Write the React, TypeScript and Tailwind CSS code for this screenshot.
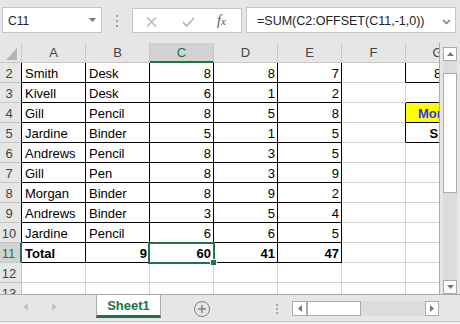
import React from 'react';

interface Row {
  n: number;
  cells: string[];
}

const rows: Row[] = [
  { n: 2, cells: ['Smith', 'Desk', '8', '8', '7', '', '8'] },
  { n: 3, cells: ['Kivell', 'Desk', '6', '1', '2', '', ''] },
  { n: 4, cells: ['Gill', 'Pencil', '8', '5', '8', '', 'Month'] },
  { n: 5, cells: ['Jardine', 'Binder', '5', '1', '5', '', 'S1'] },
  { n: 6, cells: ['Andrews', 'Pencil', '8', '3', '5', '', ''] },
  { n: 7, cells: ['Gill', 'Pen', '8', '3', '9', '', ''] },
  { n: 8, cells: ['Morgan', 'Binder', '8', '9', '2', '', ''] },
  { n: 9, cells: ['Andrews', 'Binder', '3', '5', '4', '', ''] },
  { n: 10, cells: ['Jardine', 'Pencil', '6', '6', '5', '', ''] },
  { n: 11, cells: ['Total', '9', '60', '41', '47', '', ''] },
  { n: 12, cells: ['', '', '', '', '', '', ''] },
  { n: 13, cells: ['', '', '', '', '', '', ''] },
];

const cols = ['A', 'B', 'C', 'D', 'E', 'F', 'G'];

// which border style a cell gets
const cellBorder = (r: number, c: number) => {
  const boxed = r >= 2 && r <= 11 && c <= 4;
  if (boxed) return 'border-r border-b border-black';
  if (c === 5 && (r === 2 || r === 4 || r === 5)) return 'border-r border-b border-r-black border-b-[#d4d4d4]';
  if (c === 6 && (r === 2 || r === 3 || r === 4 || r === 5)) return 'border-r border-b border-r-[#d4d4d4] border-b-black';
  return 'border-r border-b border-[#d4d4d4]';
};

const cellAlign = (r: number, c: number) => {
  if (c === 6) return 'justify-center';
  if (c >= 2 || (r === 11 && c === 1)) return 'justify-end pr-[2px]';
  return 'justify-start pl-[3px]';
};

const rowHeaderClass = (r: number) => {
  if (r === 11) return 'bg-[#d2d2d2] text-[#217346] border-r-2 border-r-[#217346] border-b border-b-[#c6c6c6]';
  if (r >= 2 && r <= 10) return 'bg-[#e6e6e6] text-[#444] border-r border-r-black border-b border-b-[#c6c6c6]';
  return 'bg-[#e6e6e6] text-[#444] border-r border-b border-[#c6c6c6]';
};

function TopBar() {
  return (
    <div className="h-[43px] bg-[#e6e6e6] flex items-start">
      {/* Name box */}
      <div className="ml-[2px] mt-[7px] w-[100px] h-[26px] bg-white border border-[#c6c6c6] flex items-center pl-[5px] pt-[1px] relative">
        <span className="text-[12px] text-[#222]">C11</span>
        <svg className="absolute left-[86px] top-[10px]" width="7" height="4" viewBox="0 0 7 4">
          <path d="M0 0 L7 0 L3.5 4 Z" fill="#777" />
        </svg>
      </div>
      {/* drag dots */}
      <div className="ml-[14px] mt-[15px] flex flex-col gap-[3px]">
        <div className="w-[2px] h-[2px] bg-[#a0a0a0]" />
        <div className="w-[2px] h-[2px] bg-[#a0a0a0]" />
        <div className="w-[2px] h-[2px] bg-[#a0a0a0]" />
      </div>
      {/* cancel / enter / fx */}
      <div className="ml-[14px] mt-[8px] w-[110px] h-[25px] bg-white border border-[#c6c6c6] flex items-center">
        <svg className="ml-[13px] mt-[3px]" width="11" height="10" viewBox="0 0 11 10">
          <path d="M1 0.5 L10 9.5 M10 0.5 L1 9.5" stroke="#b4b4b4" strokeWidth="1.3" />
        </svg>
        <svg className="ml-[25px] mt-[3px]" width="13" height="10" viewBox="0 0 13 10">
          <path d="M1 5 L4.5 9 L12 1" stroke="#b4b4b4" strokeWidth="1.6" fill="none" />
        </svg>
        <span className="ml-[22px] mt-[1px] italic text-[14px] text-[#555]" style={{ fontFamily: '"Liberation Serif", serif' }}>
          f<span className="text-[11px]">x</span>
        </span>
      </div>
      {/* formula input */}
      <div className="ml-[4px] mt-[7px] w-[210px] h-[26px] bg-white border border-[#c6c6c6] flex items-center pl-[10px] pt-[2px] relative">
        <span className="text-[12.5px] text-[#222] whitespace-nowrap">=SUM(C2:OFFSET(C11,-1,0))</span>
        <svg className="absolute left-[195px] top-[11px]" width="9" height="6" viewBox="0 0 9 6">
          <path d="M1 1 L4.5 4.5 L8 1" stroke="#777" strokeWidth="1.5" fill="none" />
        </svg>
      </div>
    </div>
  );
}

function Grid() {
  return (
    <div className="relative w-[440px] h-[251px] overflow-hidden border-r border-[#ababab]">
      {/* column headers */}
      <div className="flex h-[20px]">
        <div className="w-[22px] shrink-0 bg-[#e6e6e6] border-r border-b border-[#c6c6c6] relative">
          <svg className="absolute left-[6px] top-[5px]" width="11" height="12" viewBox="0 0 11 12">
            <path d="M11 0 L11 12 L0 12 Z" fill="#b4b4b4" />
          </svg>
        </div>
        {cols.map((c) => (
          <div
            key={c}
            className={`w-[64px] shrink-0 flex items-center justify-center border-r ${
              c === 'C'
                ? 'bg-[#d2d2d2] text-[#217346] border-r-[#c6c6c6] border-b-2 border-b-[#217346]'
                : 'bg-[#e6e6e6] text-[#444] border-b border-[#c6c6c6]'
            }`}
          >
            {c}
          </div>
        ))}
      </div>

      {/* rows */}
      {rows.map((row) => (
        <div key={row.n} className="flex h-[20px]">
          <div className={`w-[22px] shrink-0 flex items-center justify-center pr-[3px] pt-[1px] ${rowHeaderClass(row.n)}`}>
            {row.n}
          </div>
          {row.cells.map((v, ci) => (
            <div
              key={ci}
              className={`w-[64px] shrink-0 flex items-center pt-[1px] whitespace-nowrap ${cellBorder(row.n, ci)} ${cellAlign(row.n, ci)} ${
                row.n === 11 ? 'font-bold' : ''
              } ${row.n === 4 && ci === 6 ? 'bg-[#ffff00] text-[#3333ff] font-bold' : ''} ${
                row.n === 5 && ci === 6 ? 'font-bold' : ''
              }`}
            >
              {v}
            </div>
          ))}
        </div>
      ))}

      {/* active cell C11 */}
      <div className="absolute left-[148px] top-[199px] w-[67px] h-[22px] border-2 border-[#217346]" />
      <div className="absolute left-[210px] top-[216px] w-[7px] h-[7px] bg-[#217346] border border-white" />
    </div>
  );
}

function VScroll() {
  return (
    <div className="w-[20px] h-[251px] bg-[#e6e6e6] flex flex-col pl-[3px]">
      <div className="h-[4px]" />
      <div className="w-[14px] h-[14px] bg-white border border-[#ababab] flex items-center justify-center">
        <svg width="7" height="4" viewBox="0 0 7 4">
          <path d="M0 4 L7 4 L3.5 0 Z" fill="#777" />
        </svg>
      </div>
      <div className="w-[14px] flex-1 bg-[#dcdcdc] pt-[12px]">
        <div className="w-[14px] h-[120px] bg-white border border-[#ababab]" />
      </div>
      <div className="w-[14px] h-[14px] bg-white border border-[#ababab] flex items-center justify-center">
        <svg width="7" height="4" viewBox="0 0 7 4">
          <path d="M0 0 L7 0 L3.5 4 Z" fill="#777" />
        </svg>
      </div>
    </div>
  );
}

function SheetBar() {
  return (
    <div>
      <div className="h-[27px] bg-[#e6e6e6] border-t border-[#ababab] flex items-start">
        {/* nav arrows */}
        <div className="w-[96px] shrink-0 flex items-center h-[23px]">
          <svg className="ml-[23px]" width="5" height="8" viewBox="0 0 5 8">
            <path d="M5 0 L5 8 L0 4 Z" fill="#c4c4c4" />
          </svg>
          <svg className="ml-[24px]" width="5" height="8" viewBox="0 0 5 8">
            <path d="M0 0 L0 8 L5 4 Z" fill="#c4c4c4" />
          </svg>
        </div>
        {/* tab */}
        <div className="w-[65px] shrink-0 h-[23px] bg-white border-x border-[#ababab] border-b-[3px] border-b-[#217346] flex items-center justify-center">
          <span className="font-bold text-[#217346]">Sheet1</span>
        </div>
        {/* add sheet */}
        <div className="ml-[33px] mt-[6px] w-[16px] h-[16px] rounded-full border-[1.5px] border-[#808080] flex items-center justify-center">
          <svg width="8" height="8" viewBox="0 0 8 8">
            <path d="M4 0 L4 8 M0 4 L8 4" stroke="#808080" strokeWidth="1.5" />
          </svg>
        </div>
        {/* splitter dots */}
        <div className="ml-[66px] mt-[9px] flex flex-col gap-[2px]">
          <div className="w-[2px] h-[2px] bg-[#a8a8a8]" />
          <div className="w-[2px] h-[2px] bg-[#a8a8a8]" />
          <div className="w-[2px] h-[2px] bg-[#a8a8a8]" />
        </div>
        {/* horizontal scrollbar */}
        <div className="ml-[14px] mt-[6px] w-[147px] h-[15px] flex bg-[#dcdcdc]">
          <div className="w-[15px] h-[15px] bg-white border border-[#ababab] flex items-center justify-center">
            <svg width="4" height="7" viewBox="0 0 4 7">
              <path d="M4 0 L4 7 L0 3.5 Z" fill="#777" />
            </svg>
          </div>
          <div className="w-[54px] h-[15px] bg-white border border-[#ababab]" />
          <div className="flex-1" />
          <div className="w-[14px] h-[15px] bg-white border border-[#ababab] flex items-center justify-center">
            <svg width="4" height="7" viewBox="0 0 4 7">
              <path d="M0 0 L0 7 L4 3.5 Z" fill="#777" />
            </svg>
          </div>
        </div>
      </div>
      <div className="h-[3px] bg-[#f0f0f0] border-t border-[#c6c6c6]" />
    </div>
  );
}

export default function App() {
  return (
    <div
      className="w-[460px] h-[324px] overflow-hidden bg-white text-[13px] text-black leading-none"
      style={{ fontFamily: '"Liberation Sans", Arial, sans-serif' }}
    >
      <TopBar />
      <div className="flex">
        <Grid />
        <VScroll />
      </div>
      <SheetBar />
    </div>
  );
}
